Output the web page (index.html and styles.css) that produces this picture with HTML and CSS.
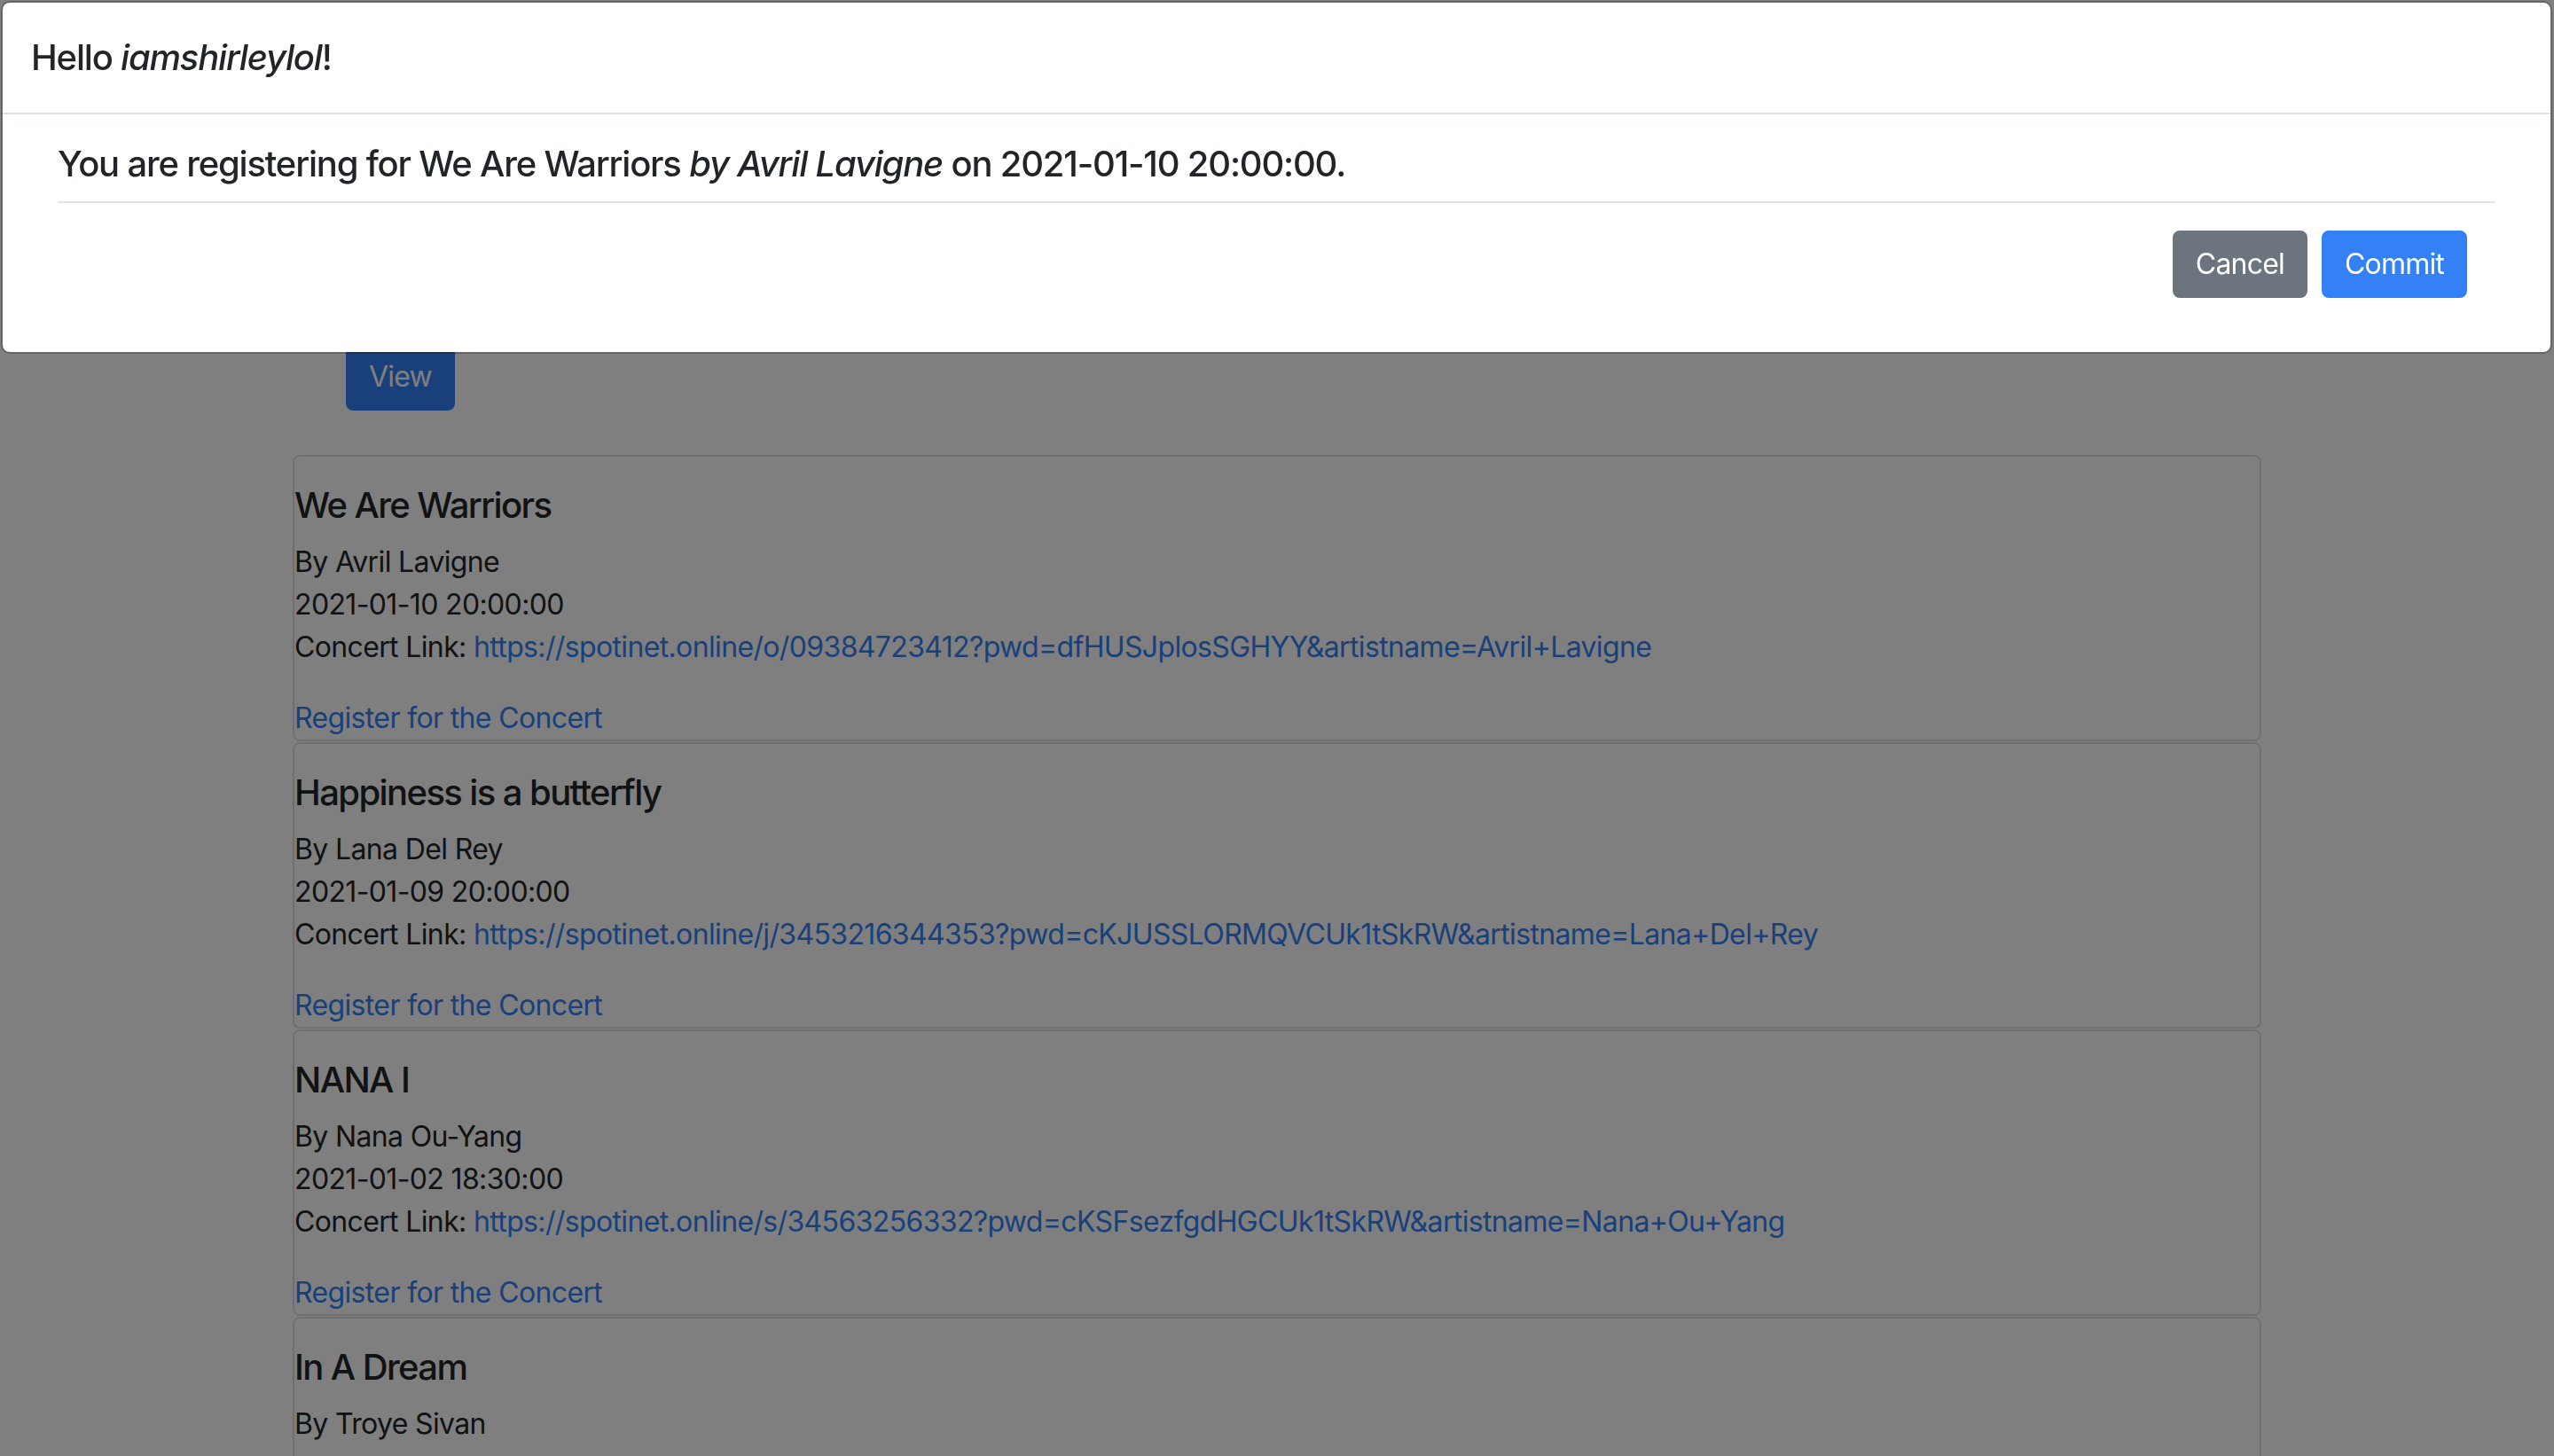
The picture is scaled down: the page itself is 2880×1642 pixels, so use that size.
FILE: index.html
```html
<!DOCTYPE html>
<html lang="en">
<head>
<meta charset="utf-8">
<title>Concerts</title>
<link rel="stylesheet" href="styles.css">
</head>
<body>
<div class="page">
  <div class="container">
    <div class="toolbar">
      <button class="btn btn-primary">View</button>
    </div>
    <div class="card">
      <h5 class="card-title">We Are Warriors</h5>
      <p class="card-text">By Avril Lavigne<br>2021-01-10 20:00:00<br>Concert Link: <a href="#">https://spotinet.online/o/09384723412?pwd=dfHUSJplosSGHYY&amp;artistname=Avril+Lavigne</a></p>
      <a class="card-link" href="#">Register for the Concert</a>
    </div>
    <div class="card">
      <h5 class="card-title">Happiness is a butterfly</h5>
      <p class="card-text">By Lana Del Rey<br>2021-01-09 20:00:00<br>Concert Link: <a href="#">https://spotinet.online/j/3453216344353?pwd=cKJUSSLORMQVCUk1tSkRW&amp;artistname=Lana+Del+Rey</a></p>
      <a class="card-link" href="#">Register for the Concert</a>
    </div>
    <div class="card">
      <h5 class="card-title">NANA I</h5>
      <p class="card-text">By Nana Ou-Yang<br>2021-01-02 18:30:00<br>Concert Link: <a href="#">https://spotinet.online/s/34563256332?pwd=cKSFsezfgdHGCUk1tSkRW&amp;artistname=Nana+Ou+Yang</a></p>
      <a class="card-link" href="#">Register for the Concert</a>
    </div>
    <div class="card card-last">
      <h5 class="card-title">In A Dream</h5>
      <p class="card-text">By Troye Sivan</p>
    </div>
  </div>
</div>

<div class="backdrop"></div>

<div class="modal">
  <div class="modal-header">
    <h5 class="modal-title">Hello <i>iamshirleylol</i>!</h5>
  </div>
  <div class="modal-body">
    <div class="modal-inner">
      <h5 class="modal-text">You are registering for We Are Warriors <i>by Avril Lavigne</i> on 2021-01-10 20:00:00.</h5>
      <hr class="divider">
    </div>
    <div class="modal-actions">
      <button class="btn btn-secondary">Cancel</button>
      <button class="btn btn-primary">Commit</button>
    </div>
  </div>
</div>
</body>
</html>
```

FILE: styles.css
```css
* { box-sizing: border-box; }

html, body {
  margin: 0;
  padding: 0;
  background: #ffffff;
}

body {
  font-family: Inter, "Open Sans", "Liberation Sans", sans-serif;
  font-size: 32px;
  line-height: 1.5;
  letter-spacing: -0.02em;
  color: #212529;
  height: 1642px;
  overflow: hidden;
}

h5 {
  margin: 0;
  font-size: 40px;
  font-weight: 500;
  line-height: 1.2;
  letter-spacing: -0.03em;
}

a {
  color: #3381f5;
  text-decoration: none;
}

.container {
  width: 2280px;
  margin: 0 auto;
  padding: 387px 30px 0;
}

.toolbar {
  padding-left: 60px;
  margin-bottom: 50px;
}

.btn {
  font-family: inherit;
  font-size: 32px;
  line-height: 48px;
  letter-spacing: -0.025em;
  padding: 12px 24px;
  border: 2px solid transparent;
  border-radius: 8px;
  color: #ffffff;
  cursor: pointer;
}

.btn-primary {
  background: #3381f5;
  border-color: #3381f5;
}

.btn-secondary {
  background: #6c757d;
  border-color: #6c757d;
}

.card {
  border: 2px solid rgba(0, 0, 0, 0.125);
  border-radius: 8px;
  padding-top: 31px;
  margin-bottom: 1px;
}

.card-title {
  margin-bottom: 16px;
  letter-spacing: -0.04em;
}

.card-text {
  margin: 0 0 32px;
}

.card-link {
  display: block;
}

.card-last {
  padding-bottom: 80px;
}

.backdrop {
  position: fixed;
  inset: 0;
  background: rgba(0, 0, 0, 0.5);
}

.modal {
  position: fixed;
  top: 1px;
  left: 1px;
  width: 2877px;
  background: #ffffff;
  border: 2px solid rgba(0, 0, 0, 0.2);
  border-radius: 10px;
  background-clip: padding-box;
}

.modal-header {
  padding: 32px;
  border-bottom: 2px solid #dee2e6;
}

.modal-title {
  line-height: 60px;
}

.modal-body {
  padding: 32px 32px 61px;
}

.modal-inner {
  padding: 0 30px;
}

.modal-text {
  margin-bottom: 18px;
}

.divider {
  margin: 0;
  border: 0;
  border-top: 2px solid #e1e4e8;
}

.modal-actions {
  display: flex;
  justify-content: flex-end;
  gap: 16px;
  padding: 31px 62px 0 0;
}
```
